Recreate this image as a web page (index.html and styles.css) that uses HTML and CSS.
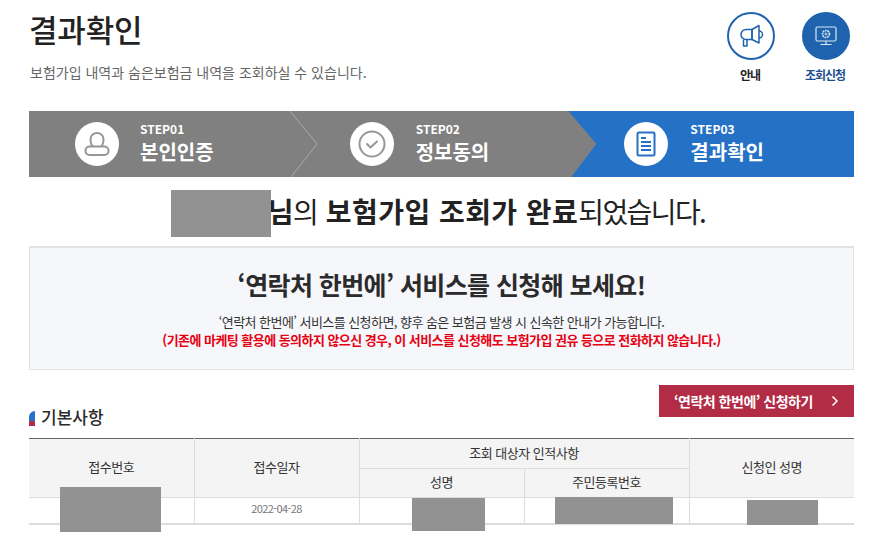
FILE: index.html
```html
<!DOCTYPE html>
<html lang="ko">
<head>
<meta charset="utf-8">
<title>결과확인</title>
<link rel="stylesheet" href="styles.css">
</head>
<body>
<div class="page">
  <header class="top">
    <div class="heading">
      <h1>결과확인</h1>
      <p>보험가입 내역과 숨은보험금 내역을 조회하실 수 있습니다.</p>
    </div>
    <nav class="quick">
      <a class="quick-item">
        <span class="quick-icon">
          <svg class="shift" width="24" height="24" viewBox="0 0 24 24" fill="none" stroke="#1f63ae" stroke-width="1.5" stroke-linejoin="round">
            <path d="M12 5.500H6a5 5 0 0 0 0 10h6z"/>
            <path d="M12 5.500L19 1.500V19L12 15.500z"/>
            <path d="M19 7a3.500 3.500 0 0 1 0 7"/>
            <path d="M3.500 15.500V22H7v-6.500"/>
          </svg>
        </span>
        <span class="quick-label">안내</span>
      </a>
      <a class="quick-item">
        <span class="quick-icon solid">
          <svg width="22" height="20" viewBox="0 0 22 20" fill="none" stroke="#dbe8f6" stroke-width="1.2">
            <rect x="1" y="1" width="20" height="14" rx="1.500"/>
            <path d="M11 15v3M5.500 18.500h11"/>
            <circle cx="11" cy="8" r="3.500" stroke-dasharray="1.800 0.700" stroke-width="1.600"/>
            <circle cx="11" cy="8" r="1" stroke-width="0.900"/>
          </svg>
        </span>
        <span class="quick-label accent">조회신청</span>
      </a>
    </nav>
  </header>

  <ol class="steps">
    <li class="step">
      <span class="step-icon">
        <svg width="26" height="24" viewBox="0 0 26 24" fill="none" stroke="#979797" stroke-width="2">
          <path d="M9 14.500C7 13 6.500 10.500 6.500 7a6.500 6 0 0 1 13 0C19.500 10.500 19 13 17 14.500"/>
          <rect x="1.500" y="14.500" width="23" height="8.500" rx="4"/>
        </svg>
      </span>
      <span class="step-text"><small>STEP01</small><strong>본인인증</strong></span>
      <svg class="step-divider" width="30" height="66" viewBox="0 0 30 66" fill="none" stroke="#a9a9a9"><path d="M1 0l27 33-26 33"/></svg>
    </li>
    <li class="step">
      <span class="step-icon">
        <svg width="28" height="28" viewBox="0 0 28 28" fill="none" stroke="#979797" stroke-width="2">
          <circle cx="14" cy="14" r="12.500"/>
          <path d="M9 14l3.500 3.500L19 11.500" stroke-linecap="round" stroke-linejoin="round"/>
        </svg>
      </span>
      <span class="step-text"><small>STEP02</small><strong>정보동의</strong></span>
    </li>
    <li class="step current">
      <span class="step-icon">
        <svg width="20" height="26" viewBox="0 0 20 26" fill="none" stroke="#2571c6" stroke-width="2">
          <rect x="1.500" y="1.500" width="17" height="23" rx="1.500"/>
          <path d="M5 7h5M5 11h10M5 15h10M5 19h10"/>
        </svg>
      </span>
      <span class="step-text"><small>STEP03</small><strong>결과확인</strong></span>
    </li>
  </ol>

  <div class="done"><span class="name-slot"></span><b>님</b>의 <b class="wide">보험가입 조회가 완료</b><span class="tight">되었습니다.</span><span class="mask mask-name"></span></div>

  <section class="notice">
    <h2>‘연락처 한번에’ 서비스를 신청해 보세요!</h2>
    <p>‘연락처 한번에’ 서비스를 신청하면, 향후 숨은 보험금 발생 시 신속한 안내가 가능합니다.</p>
    <p class="warn">(기존에 마케팅 활용에 동의하지 않으신 경우, 이 서비스를 신청해도 보험가입 권유 등으로 전화하지 않습니다.)</p>
  </section>

  <div class="section-head">
    <h3><span class="mark"></span>기본사항</h3>
    <a class="apply">‘연락처 한번에’ 신청하기<svg width="8" height="12" viewBox="0 0 8 12" fill="none" stroke="#fff" stroke-width="1.500"><path d="M1.500 1.500L6 6l-4.500 4.500"/></svg></a>
  </div>

  <div class="table-wrap">
    <table>
      <thead>
        <tr class="head-top">
          <th rowspan="2">접수번호</th>
          <th rowspan="2">접수일자</th>
          <th colspan="2">조회 대상자 인적사항</th>
          <th rowspan="2">신청인 성명</th>
        </tr>
        <tr>
          <th>성명</th>
          <th>주민등록번호</th>
        </tr>
      </thead>
      <tbody>
        <tr>
          <td><span class="mask mask-a"></span></td>
          <td>2022-04-28</td>
          <td><span class="mask mask-b"></span></td>
          <td><span class="mask mask-c"></span></td>
          <td><span class="mask mask-d"></span></td>
        </tr>
      </tbody>
    </table>
  </div>
</div>
</body>
</html>
```
FILE: styles.css
```css
* { box-sizing: border-box; }
html, body { margin: 0; padding: 0; background: #fff; overflow: hidden; }
body { font-family: "Noto Sans CJK KR", "Noto Sans", sans-serif; color: #222; }
.page { width: 825px; margin-left: 29px; height: 547px; position: relative; }

.top { display: flex; justify-content: space-between; height: 111px; }
.heading h1 { margin: 0; padding-top: 7px; font-size: 31px; line-height: 44px; font-weight: 500; color: #222; letter-spacing: -0.2px; }
.heading p { margin: 10px 0 0 1px; font-size: 14px; line-height: 22px; color: #666; letter-spacing: 0; }

.quick { display: flex; gap: 27px; padding-top: 12px; margin-right: 4px; }
.quick-item { display: flex; flex-direction: column; align-items: center; width: 48px; }
.quick-icon { width: 48px; height: 48px; border-radius: 50%; border: 2px solid #1f63ae; display: flex; align-items: center; justify-content: center; }
.quick-icon.solid { background: #1f63ae; }
.quick-label { margin: 6px 2px 0 0; font-size: 12px; line-height: 18px; font-weight: 700; color: #222; white-space: nowrap; letter-spacing: -1px; }
.quick-label.accent { color: #1f4f8f; }
.shift { margin-left: 1px; }

.steps { list-style: none; margin: 0; padding: 0; display: flex; height: 66px; background: #808080; }
.step { flex: 1; position: relative; display: flex; align-items: center; padding-left: 46px; gap: 21px; color: #fff; }
.step + .step { padding-left: 45px; gap: 22px; }
.step-divider { position: absolute; right: -14px; top: 0; }
.step.current::before { content: ""; position: absolute; left: -11px; right: 0; top: 0; height: 66px; background: #2571c6; clip-path: polygon(0 0, 100% 0, 100% 100%, 3px 100%, 28px 50%); }
.step-icon { position: relative; width: 44px; height: 44px; border-radius: 50%; background: #fff; display: flex; align-items: center; justify-content: center; }
.step-text { position: relative; display: flex; flex-direction: column; padding-top: 2px; }
.step-text small { font-size: 12px; line-height: 14px; font-weight: 700; }
.step-text strong { font-size: 20px; line-height: 32px; font-weight: 700; letter-spacing: 0; }

.done { position: relative; height: 69px; display: flex; align-items: center; justify-content: center; white-space: pre; font-size: 28px; letter-spacing: -0.42px; color: #222; padding: 0 9px 2px 0; }
.done b { font-weight: 700; }
.done .wide { letter-spacing: 0.45px; }
.done .tight { letter-spacing: -1.6px; }
.name-slot { width: 99px; height: 1px; }
.mask { position: absolute; background: #929292; display: block; }
.mask-name { left: 142px; top: 13px; width: 100px; height: 47px; }

.notice { height: 124px; border: 1px solid #e2e2e2; border-top-width: 2px; background: #f6f7fb; text-align: center; padding-top: 19px; }
.notice h2 { margin: 0 0 12px; font-size: 25px; line-height: 34px; font-weight: 700; color: #2b2b2b; letter-spacing: -0.6px; }
.notice p { margin: 0; font-size: 13px; line-height: 18px; color: #333; letter-spacing: -0.55px; }
.notice .warn { color: #e60012; font-weight: 700; }

.section-head { display: flex; justify-content: space-between; align-items: flex-start; height: 68px; padding-top: 15px; }
.section-head h3 { margin: 18px 0 0; display: flex; align-items: center; gap: 6px; font-size: 17px; line-height: 28px; font-weight: 500; color: #2b2b2b; }
.mark { width: 6px; height: 15px; margin-top: 3px; background: linear-gradient(#2571c6 66%, #b22c46 66%); border-top-left-radius: 6px; }
.apply { width: 195px; height: 32px; background: #b22c46; color: #fff; font-size: 14px; font-weight: 700; letter-spacing: -0.5px; display: flex; align-items: center; justify-content: space-between; padding: 0 15px; }

.table-wrap { position: relative; }
table { width: 825px; border-collapse: collapse; table-layout: fixed; border-top: 1px solid #666; }
th { background: #f4f4f4; font-size: 13px; font-weight: 400; color: #333; height: 29px; border: 1px solid #ddd; border-top: none; letter-spacing: -0.5px; padding: 0 0 3px; }
.head-top th { height: 30px; }
th:first-child, td:first-child { border-left: none; }
th:last-child, td:last-child { border-right: none; }
thead { border-bottom: 1px solid #666; }
td { position: relative; height: 26px; border: 1px solid #ddd; border-top: none; text-align: center; font-size: 11px; color: #777; letter-spacing: -0.6px; padding: 0 0 5px; }
tbody tr { border-bottom: 2px solid #ddd; }
.mask-a { left: 31px; top: -11px; width: 101px; height: 45px; }
.mask-b { left: 52px; top: 0; width: 73px; height: 33px; }
.mask-c { left: 30px; top: -1px; width: 118px; height: 27px; }
.mask-d { left: 57px; top: 2px; width: 71px; height: 25px; }
```
